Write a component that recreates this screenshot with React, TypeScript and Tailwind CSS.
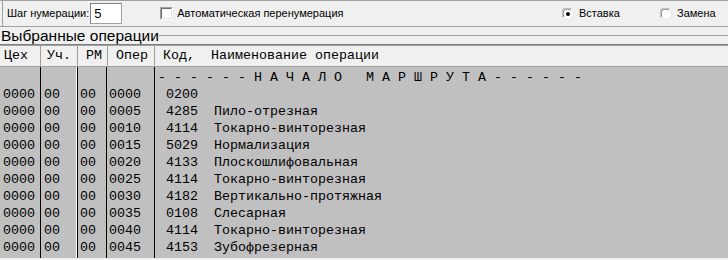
import React from "react";

const rows = [
  ["0000", "00", "00", "0000", "0200", ""],
  ["0000", "00", "00", "0005", "4285", "Пило-отрезная"],
  ["0000", "00", "00", "0010", "4114", "Токарно-винторезная"],
  ["0000", "00", "00", "0015", "5029", "Нормализация"],
  ["0000", "00", "00", "0020", "4133", "Плоскошлифовальная"],
  ["0000", "00", "00", "0025", "4114", "Токарно-винторезная"],
  ["0000", "00", "00", "0030", "4182", "Вертикально-протяжная"],
  ["0000", "00", "00", "0035", "0108", "Слесарная"],
  ["0000", "00", "00", "0040", "4114", "Токарно-винторезная"],
  ["0000", "00", "00", "0045", "4153", "Зубофрезерная"],
];

const mono = "font-['Liberation_Mono','Courier_New',monospace] text-[13.33px] text-black";

function Checkbox() {
  return (
    <svg width="13" height="13" viewBox="0 0 13 13">
      <rect x="0" y="0" width="13" height="13" fill="#ffffff" />
      <path d="M0.5 12.5 V0.5 H12.5" stroke="#a0a0a0" fill="none" />
      <path d="M1.5 11.5 V1.5 H11.5" stroke="#696969" fill="none" />
      <path d="M1.5 11.5 H11.5 V1.5" stroke="#e3e3e3" fill="none" />
    </svg>
  );
}

function Radio({ checked }: { checked?: boolean }) {
  return (
    <svg width="12" height="12" viewBox="0 0 12 12">
      <circle cx="6" cy="6" r="5.5" fill="#ffffff" />
      <path d="M1.2 9.5 A5.5 5.5 0 0 1 9.5 1.2" stroke="#a0a0a0" strokeWidth="1" fill="none" />
      <path d="M2.3 8.5 A4.3 4.3 0 0 1 8.5 2.3" stroke="#696969" strokeWidth="1" fill="none" />
      <path d="M10.6 3 A5.5 5.5 0 0 1 3 10.6" stroke="#e3e3e3" strokeWidth="1" fill="none" />
      {checked && <circle cx="6" cy="6" r="2" fill="#000000" />}
    </svg>
  );
}

function BodyRow({ cells }: { cells: string[] }) {
  return (
    <div className={`flex h-[17px] items-center whitespace-pre leading-[17px] ${mono}`}>
      <div className="w-[41px] shrink-0 border-r border-black pl-[3px]">{cells[0]}</div>
      <div className="w-[36px] shrink-0 border-r border-white pl-[3px]">{cells[1]}</div>
      <div className="w-[30px] shrink-0 border-x border-black pl-[2px]">{cells[2]}</div>
      <div className="w-[48px] shrink-0 border-r border-black pl-[2px]">{cells[3]}</div>
      <div className="flex-1 pl-[3px]">{cells[4] ? ` ${cells[4]}  ${cells[5]}` : ""}</div>
    </div>
  );
}

function Cols() {
  return (
    <>
      <div className="w-[41px] shrink-0 h-full border-r border-black" />
      <div className="w-[36px] shrink-0 h-full border-r border-white" />
      <div className="w-[30px] shrink-0 h-full border-x border-black" />
      <div className="w-[48px] shrink-0 h-full border-r border-black" />
    </>
  );
}

export default function App() {
  return (
    <div className="w-[728px] h-[260px] overflow-hidden bg-[#f0f0f0] flex flex-col font-['Liberation_Sans',Arial,sans-serif]">
      {/* Top bar */}
      <div className="h-[27px] shrink-0 border-y border-[#a0a0a0] flex">
        <div className="ml-[2px] border-l border-[#a0a0a0] flex-1 flex items-center text-[11px] text-black">
          <span className="ml-[4px]">Шаг нумерации:</span>
          <div className="ml-[1px] w-[32px] h-[21px] bg-white border border-[#a0a0a0] border-t-[#808080] border-l-[#808080] flex items-center pl-[3px] text-[13px]">
            5
          </div>
          <div className="ml-[38px] flex items-center">
            <Checkbox />
          </div>
          <span className="ml-[4px]">Автоматическая перенумерация</span>
          <div className="ml-auto w-[98px] flex items-center">
            <Radio checked />
            <span className="ml-[5px]">Вставка</span>
          </div>
          <div className="w-[68px] flex items-center">
            <Radio />
            <span className="ml-[5px]">Замена</span>
          </div>
        </div>
      </div>

      {/* Group title */}
      <div className="h-[17px] shrink-0 flex items-center">
        <span className="pl-[1px] text-[15.5px] leading-[16px] text-black">Выбранные операции</span>
        <div className="flex-1 h-px bg-[#a0a0a0] mt-[-1px]" />
      </div>

      <div className="h-px bg-[#808080] shrink-0" />
      <div className="h-px bg-[#a0a0a0] shrink-0" />

      {/* Header */}
      <div className={`h-[21px] shrink-0 flex items-center whitespace-pre border-b border-[#a0a0a0] ${mono}`}>
        <div className="h-full flex items-center w-[41px] shrink-0 border-r border-[#a0a0a0] pl-[4px]">Цех</div>
        <div className="h-full flex items-center w-[37px] shrink-0 border-r border-[#a0a0a0] pl-[6px]">Уч.</div>
        <div className="h-full flex items-center w-[30px] shrink-0 border-r border-[#a0a0a0] pl-[8px]">PM</div>
        <div className="h-full flex items-center w-[47px] shrink-0 border-r border-[#a0a0a0] pl-[8px]">Опер</div>
        <div className="h-full flex items-center flex-1 pl-[8px]">Код,  Наименование операции</div>
      </div>

      {/* Body */}
      <div className="flex-1 bg-[#c0c0c0] flex flex-col mb-[2px]">
        <div className="flex h-[2px] shrink-0">
          <Cols />
        </div>
        <div className={`flex h-[17px] items-center whitespace-pre leading-[17px] ${mono}`}>
          <Cols />
          <div className="flex-1 pl-[3px]">- - - - - - Н А Ч А Л О   М А Р Ш Р У Т А - - - - - -</div>
        </div>
        {rows.map((r, i) => (
          <BodyRow key={i} cells={r} />
        ))}
        <div className="flex flex-1">
          <Cols />
          <div className="flex-1" />
        </div>
      </div>
    </div>
  );
}
